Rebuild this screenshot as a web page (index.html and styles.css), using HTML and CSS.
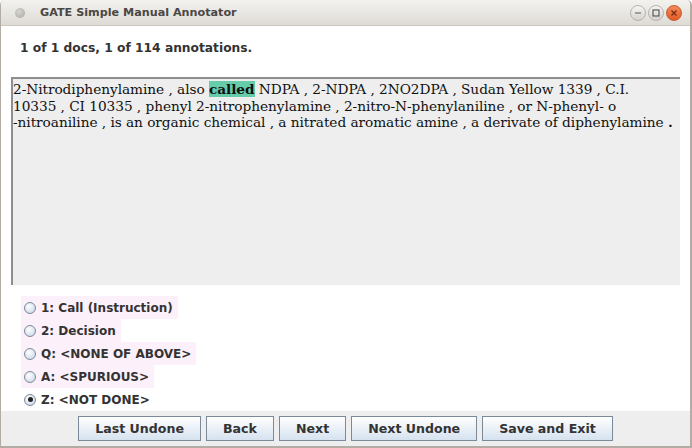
FILE: index.html
```html
<!DOCTYPE html>
<html>
<head>
<meta charset="utf-8">
<link rel="stylesheet" href="styles.css">
</head>
<body>
<div class="window">
  <div class="titlebar">
    <span class="app-dot"></span>
    <span class="title">GATE Simple Manual Annotator</span>
    <div class="wm-buttons">
      <span class="wm wm-min"><svg width="10" height="10" viewBox="0 0 10 10"><line x1="2" y1="5" x2="8" y2="5" stroke="#5a5a5a" stroke-width="1.2"/></svg></span>
      <span class="wm wm-max"><svg width="10" height="10" viewBox="0 0 10 10"><rect x="2" y="2" width="6" height="6" fill="none" stroke="#5a5a5a" stroke-width="1.2"/></svg></span>
      <span class="wm wm-close"><svg width="10" height="10" viewBox="0 0 10 10"><path d="M2.5 2.5 L7.5 7.5 M7.5 2.5 L2.5 7.5" stroke="#7a2a10" stroke-width="1.3"/></svg></span>
    </div>
  </div>
  <div class="content">
    <div class="status">1 of 1 docs, 1 of 114 annotations.</div>
    <div class="doc">
      <div class="line">2-Nitrodiphenylamine , also <span class="hl">called</span> NDPA , 2-NDPA , 2NO2DPA , Sudan Yellow 1339 , C.I.</div>
      <div class="line">10335 , CI 10335 , phenyl 2-nitrophenylamine , 2-nitro-N-phenylaniline , or N-phenyl- o</div>
      <div class="line">-nitroaniline , is an organic chemical , a nitrated aromatic amine , a derivate of diphenylamine <b>.</b></div>
    </div>
    <div class="options">
      <label class="opt pink"><span class="radio"></span>1: Call (Instruction)</label>
      <label class="opt pink"><span class="radio"></span>2: Decision</label>
      <label class="opt pink"><span class="radio"></span>Q: &lt;NONE OF ABOVE&gt;</label>
      <label class="opt pink"><span class="radio"></span>A: &lt;SPURIOUS&gt;</label>
      <label class="opt"><span class="radio checked"></span>Z: &lt;NOT DONE&gt;</label>
    </div>
  </div>
  <div class="buttonbar">
    <button class="btn">Last Undone</button>
    <button class="btn">Back</button>
    <button class="btn">Next</button>
    <button class="btn">Next Undone</button>
    <button class="btn">Save and Exit</button>
  </div>
</div>
</body>
</html>
```
FILE: styles.css
```css
html, body {
  margin: 0;
  padding: 0;
  background: #ffffff;
}
.window {
  width: 692px;
  height: 448px;
  display: flex;
  flex-direction: column;
  box-sizing: border-box;
  border-left: 1px solid #b3aca4;
  border-right: 2px solid #b3aca4;
  border-bottom: 2px solid #b3aca4;
  border-radius: 5px 5px 0 0;
  overflow: hidden;
  font-family: "DejaVu Sans", sans-serif;
}
.titlebar {
  height: 26px;
  flex: none;
  display: flex;
  align-items: center;
  background: linear-gradient(#f3f2ef, #dedbd5);
  border-bottom: 1px solid #cbc6be;
  box-sizing: border-box;
  padding-left: 14px;
}
.app-dot {
  width: 10px;
  height: 10px;
  border-radius: 50%;
  background: radial-gradient(circle at 40% 35%, #d8d6d2, #a8a5a0);
  margin-right: 15px;
}
.title {
  font-family: "DejaVu Sans", sans-serif;
  font-weight: bold;
  font-size: 11.2px;
  color: #4a4844;
}
.wm-buttons {
  margin-left: auto;
  margin-right: 8px;
  display: flex;
  gap: 2px;
}
.wm {
  width: 16px;
  height: 16px;
  border-radius: 50%;
  display: flex;
  align-items: center;
  justify-content: center;
  box-sizing: border-box;
  border: 1px solid #b6b2ab;
  background: linear-gradient(#f7f6f4, #d6d3ce);
}
.wm-close {
  border-color: #c45a2e;
  background: linear-gradient(#f48a5a, #e35a26);
}
.content {
  flex: 1;
  display: flex;
  flex-direction: column;
  background: #ffffff;
}
.status {
  font-weight: bold;
  font-size: 12.25px;
  color: #333333;
  padding: 15px 0 0 19px;
  height: 36px;
  box-sizing: border-box;
}
.doc {
  margin: 15px 0 0 10px;
  width: 669px;
  height: 208px;
  box-sizing: border-box;
  background: #eeeeee;
  border-top: 2px solid #8e8e8e;
  border-left: 2px solid #8e8e8e;
  padding: 2px 0 0 0;
  font-family: "DejaVu Serif", serif;
  font-size: 13.7px;
  letter-spacing: -0.05px;
  color: #111111;
  line-height: 16.5px;
}
.line {
  white-space: nowrap;
}
.hl {
  background: #66cdaa;
  font-weight: bold;
}
.options {
  display: flex;
  flex-direction: column;
  align-items: flex-start;
  padding: 11px 0 0 20px;
}
.opt {
  display: flex;
  align-items: center;
  height: 23px;
  padding-right: 5px;
  font-weight: bold;
  font-size: 12px;
  color: #333333;
}
.opt.pink {
  background: #fcf0fa;
}
.radio {
  width: 12px;
  height: 12px;
  border-radius: 50%;
  box-sizing: border-box;
  border: 1px solid #7d8a98;
  background: radial-gradient(circle at 40% 35%, #ffffff, #c2d2e4);
  margin: 0 5px 0 3px;
  position: relative;
}
.radio.checked::after {
  content: "";
  position: absolute;
  left: 2.5px;
  top: 2.5px;
  width: 5px;
  height: 5px;
  border-radius: 50%;
  background: #222222;
}
.buttonbar {
  height: 35px;
  flex: none;
  background: #eeeeee;
  display: flex;
  justify-content: center;
  align-items: center;
  gap: 5px;
  padding-bottom: 1px;
  box-sizing: border-box;
}
.btn {
  height: 25px;
  padding: 0 16px;
  border: 1px solid #7a8a99;
  background: linear-gradient(#ffffff, #d6e2ef);
  font-family: "DejaVu Sans", sans-serif;
  font-weight: bold;
  font-size: 12.6px;
  color: #333333;
  border-radius: 0;
}
```
